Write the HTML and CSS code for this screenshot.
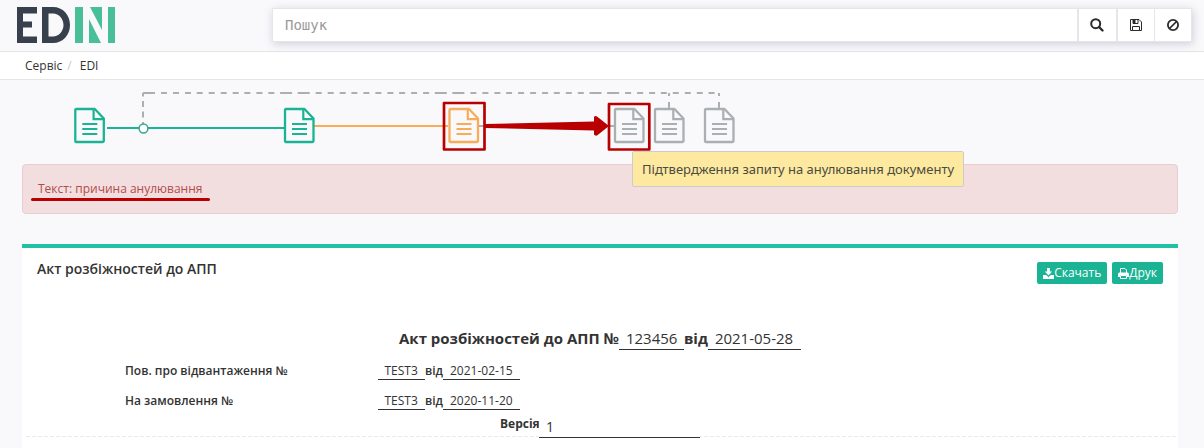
FILE: index.html
```html
<!DOCTYPE html>
<html lang="uk">
<head>
<meta charset="utf-8">
<title>EDIN</title>
<link rel="stylesheet" href="styles.css">
</head>
<body>
<header class="topbar">
  <svg class="logo" width="100" height="38" viewBox="0 0 100 38" role="img" aria-label="EDIN">
    <path fill="#37404c" d="M1 1H21V7.500H7V15.500H16V21.500H7V30.500H21V37H1Z"/>
    <path fill="#37404c" fill-rule="evenodd" d="M26 1H37C47 1 54 9 54 19S47 37 37 37H26ZM32.500 7.500V30.500H37C43 30.500 47.500 25 47.500 19S43 7.500 37 7.500Z"/>
    <path fill="#48bf97" d="M59 1H67V37H59ZM92 1H99V37H92ZM74 1H86V24ZM73 13L85 37H73Z"/>
  </svg>
  <div class="search">
    <div class="search-input">Пошук</div>
    <div class="tool tool-find"><svg width="14" height="14" viewBox="0 0 14 14"><circle cx="5.700" cy="5.700" r="4.500" fill="none" stroke="#2b2b2b" stroke-width="2"/><path d="M9 9L12.500 12.500" stroke="#2b2b2b" stroke-width="2.400" stroke-linecap="round"/></svg></div>
    <div class="tool tool-save"><svg width="12" height="12" viewBox="0 0 12 12"><path d="M.5.5H9L11.500 3V11.500H.5ZM2.500 11.500V7.500H9.500V11.500M3 .5V4.500H8V.5" fill="none" stroke="#2b2b2b"/><path d="M3 1H5.500V4H3Z" fill="#2b2b2b"/></svg></div>
    <div class="tool"><svg width="12" height="12" viewBox="0 0 12 12"><circle cx="6" cy="6" r="5.100" fill="none" stroke="#2b2b2b" stroke-width="1.800"/><path d="M2.500 9.500L9.500 2.500" stroke="#2b2b2b" stroke-width="1.700"/></svg></div>
  </div>
</header>
<nav class="crumbs"><span class="crumb-root">Сервіс</span><span class="slash">/</span><span class="crumb-edi">EDI</span></nav>

<main>
  <section class="flow">
    <svg class="chain" width="1204" height="84" viewBox="0 80 1204 84" fill="none">
      <defs>
        <g id="doc" stroke="currentColor">
          <path d="M2 1H20.500L29.500 10.500V33Q29.500 34 28.500 34H2Q1 34 1 33V2Q1 1 2 1Z" stroke-width="2.300" stroke-linejoin="round"/>
          <path d="M19.300 1V11.200H29.500" stroke-width="2.200"/>
          <path d="M8 16H23M8 21H23M8 26H23" stroke-width="2.200"/>
        </g>
      </defs>
      <g stroke="#aaafb1" stroke-width="2">
        <path d="M143 128V93" stroke-dasharray="6 4.500"/>
        <path d="M143 93H719.500" stroke-dasharray="12 6 6 6 6 6 6 5.700 6 6 6 6 6 6 6 5.700 6 6 6 6 6 5.700 12 5.600"/>
        <path d="M669 93V108M719 93V108" stroke-dasharray="3 6 6 2"/>
        <path d="M479 126H614"/>
      </g>
      <path d="M107 128H284" stroke="#1ab394" stroke-width="2"/>
      <path d="M314 126H448" stroke="#f8ac59" stroke-width="2"/>
      <circle cx="143.500" cy="128.500" r="4.400" fill="#fff" stroke="#3aa58e" stroke-width="1.500"/>
      <use href="#doc" x="74.300" y="108" class="done"/>
      <use href="#doc" x="284" y="108" class="done"/>
      <use href="#doc" x="448.500" y="108" class="active"/>
      <use href="#doc" x="614" y="108" class="idle"/>
      <use href="#doc" x="654" y="108" class="idle"/>
      <use href="#doc" x="704" y="108" class="idle"/>
      <g stroke="#b90000" stroke-width="2.700" stroke-linejoin="round">
        <rect x="444" y="103" width="40.500" height="46.500"/>
        <rect x="609" y="104" width="40.300" height="45.500"/>
      </g>
      <path fill="#b90000" d="M485 124L594 121.500V117Q595 115.500 597 116.500L609 126L597 135.500Q595 136 594 134.500V130.500L485 128Z"/>
    </svg>
    <div class="tip"><span class="tip-text">Підтвердження запиту на анулювання документу</span></div>
  </section>

  <section class="alert"><span class="reason">Текст: причина анулювання</span></section>

  <section class="panel">
    <div class="panel-head">
      <h1 class="panel-title">Акт розбіжностей до АПП</h1>
      <div class="actions">
        <span class="btn btn-download"><svg width="11" height="11" viewBox="0 0 12 11" preserveAspectRatio="none"><path fill="#fff" d="M4.500 0H7.500V3.500H10L6 7.500L2 3.500H4.500ZM0 7H3.500L6 9.200L8.500 7H12V11H0Z"/></svg><span class="download">Скачать</span></span>
        <span class="btn"><svg width="11" height="11" viewBox="0 0 11 11"><path fill="none" stroke="#fff" d="M2.500 5V.5H7L8.500 2V5M2.500 7.500V10.500H8.500V7.500Z"/><path fill="#fff" d="M1.500 4.500H9.500Q11 4.500 11 6V9H9V7H2V9H0V6Q0 4.500 1.500 4.500Z"/></svg><span class="print">Друк</span></span>
      </div>
    </div>
    <h2 class="doc-title"><b class="doc-name">Акт розбіжностей до АПП №</b><span class="val val-no">123456</span><b class="doc-from">від</b><span class="val val-day">2021-05-28</span></h2>
    <div class="row"><b class="label label-ship">Пов. про відвантаження №</b><span class="val val-ref">TEST3</span><b class="from">від</b><span class="val val-date">2021-02-15</span></div>
    <div class="row"><b class="label label-order">На замовлення №</b><span class="val val-ref">TEST3</span><b class="from">від</b><span class="val val-date">2020-11-20</span></div>
    <div class="version"><b class="version-label">Версія</b><span class="version-val">1</span></div>
  </section>
</main>
</body>
</html>
```
FILE: styles.css
```css
* { box-sizing: border-box; }
body {
  margin: 0;
  height: 448px;
  overflow: hidden;
  background: #f9f9fb;
  color: #333;
  font: 12px/18px "Open Sans", "Noto Sans", sans-serif;
  white-space: nowrap;
}
svg { display: block; flex: none; }
.topbar {
  display: flex;
  justify-content: space-between;
  height: 52px;
  padding: 6px 12px 0 16px;
  border-bottom: 1px solid #e4e4e7;
}
.search {
  display: flex;
  width: 920px;
  height: 34px;
  margin-top: 2px;
  border: 1px solid #e5e6e7;
  background: #fff;
  box-shadow: 1px 2px 8px rgba(80, 80, 120, .25);
}
.search-input {
  flex: 1;
  padding-left: 12px;
  color: #999;
  font: 14px/32px "DejaVu Sans Mono", monospace;
}
.tool {
  display: flex;
  align-items: center;
  justify-content: center;
  width: 37px;
  border-left: 1px solid #e5e6e7;
}
.tool-find { width: 39px; border-left-width: 2px; }
.tool-find svg { margin-right: 1px; }
.tool-save { width: 38px; border-left-width: 2px; }
.crumbs {
  display: flex;
  height: 28px;
  padding: 5px 0 0 25px;
  border-bottom: 1px solid #e4e4e7;
  background: #fff;
}
.slash { margin: 0 8px 0 5px; color: #ccc; }
.flow { position: relative; height: 84px; }
.done { color: #1ab394; }
.active { color: #f8ac59; }
.idle { color: #aaafb1; }
.tip {
  position: absolute;
  z-index: 1;
  left: 632px;
  top: 71px;
  width: 332px;
  height: 36px;
  padding-left: 9px;
  border: 1px solid #ccc;
  border-radius: 2px;
  background: #fde9a0;
  color: #4b4b40;
  font: 13px/35px "Noto Sans", sans-serif;
}
.alert {
  height: 50px;
  margin: 0 26px 0 22px;
  padding: 15px;
  border: 1px solid #ebccd1;
  border-radius: 4px;
  background: #f2dede;
  color: #b24c4a;
}
.reason { position: relative; display: inline-block; }
.reason::after {
  content: "";
  position: absolute;
  left: -7px;
  top: 18px;
  width: 179px;
  height: 3px;
  border-radius: 2px;
  background: #b90000;
}
.panel {
  height: 210px;
  margin: 30px 26px 0 22px;
  border-top: 4px solid #1fc2a4;
  background: #fff;
}
.panel-head {
  display: flex;
  justify-content: space-between;
  height: 79px;
  padding: 11px 15px 0;
}
.panel-title { margin: 0; font-size: 14px; line-height: 20px; font-weight: 600; }
.actions { display: flex; gap: 5px; padding-top: 3px; }
.btn {
  display: flex;
  align-items: center;
  height: 22px;
  padding: 0 6px;
  border-radius: 2px;
  background: #1ab394;
  color: #fff;
}
.doc-title {
  display: flex;
  height: 23px;
  margin: 0 0 0 377px;
  font-size: 15px;
  line-height: 22px;
  font-weight: 400;
}
.doc-name, .doc-from { font-weight: 700; }
.val { padding-left: 7px; border-bottom: 1px solid #333; }
.val-no { width: 65px; }
.val-day { width: 93px; }
.row { display: flex; height: 18px; margin: 12px 0 0 103px; }
.row b { font-weight: 600; }
.label { width: 253px; }
.val-ref { width: 47px; padding-left: 6.500px; }
.val-date { width: 77px; }
.version {
  display: flex;
  height: 32px;
  margin: 0 0 0 4px;
  padding-left: 474px;
  background: repeating-linear-gradient(90deg, #e7eaec 0 4px, transparent 4px 6px) 0 26px / 100% 1px no-repeat;
}
.version-label { width: 39px; padding-top: 5px; font-weight: 700; }
.version-val { width: 161px; height: 28px; padding: 8px 0 0 7px; border-bottom: 1px solid #333; background: #fff; font-size: 14px; }
```
